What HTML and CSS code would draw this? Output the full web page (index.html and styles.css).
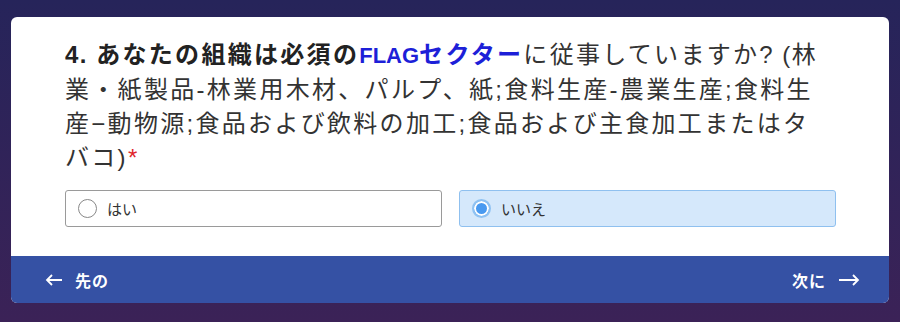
FILE: index.html
```html
<!DOCTYPE html>
<html>
    <head>
        <meta charset="UTF-8">
        <meta name="viewport" content="width=device-width, initial-scale=1.0">
        <title>Survey</title>
        <link rel="stylesheet" href="styles.css">
    </head>
    <body>
        <div class="card">
            <div class="cardbody">
                <p class="question">
                    <b><span class="en">4. </span>あなたの組織は必須の<span class="flag en small">FLAG</span><span class="flag">セクター</span></b>に従事していますか<span class="en">? (</span>林<br>業・紙製品-林業用木材、パルプ、紙;食料生産-農業生産;食料生<br>産&minus;動物源;食品および飲料の加工;食品および主食加工またはタ<br>バコ)<span class="req">*</span>
                </p>
                <div class="options">
                    <label class="option">
                        <span class="radio"></span>
                        <span>はい</span>
                    </label>
                    <label class="option selected">
                        <span class="radio"></span>
                        <span>いいえ</span>
                    </label>
                </div>
            </div>
            <div class="footer">
                <span class="navbtn">
                    <svg class="arrow" width="18" height="12" viewBox="0 0 18 12"><path d="M17 6H2M7 1L2 6l5 5" fill="none" stroke="white" stroke-width="1.8"/></svg>
                    先の
                </span>
                <span class="navbtn">
                    次に
                    <svg class="arrow" width="22" height="12" viewBox="0 0 22 12"><path d="M1 6h19M15 1l5 5-5 5" fill="none" stroke="white" stroke-width="1.8"/></svg>
                </span>
            </div>
        </div>
    </body>
</html>
```

FILE: styles.css
```css
*{
    box-sizing: border-box;
    font-family: "Liberation Sans", "Noto Sans CJK JP", sans-serif;
}
body{
    margin: 0;
    height: 322px;
    background: linear-gradient(#26245a, #3b2257);
    padding: 17px 11px 0 11px;
}
.card{
    background-color: white;
    border-radius: 6px;
    overflow: hidden;
}
.cardbody{
    padding: 21px 53px 29px 54px;
}
.question{
    margin: 0 -20px 0 0;
    font-size: 24px;
    line-height: 34px;
    letter-spacing: 2.3px;
    color: #333;
}
.question b{
    color: #222;
}
.en{
    font-size: 24px;
    letter-spacing: 1.5px;
}
.small{
    font-size: 22px;
    letter-spacing: 0;
}
.flag{
    color: #1d1fd8;
}
.req{
    color: #e0262c;
}
.options{
    display: grid;
    grid-template-columns: 1fr 1fr;
    gap: 17px;
    margin-top: 15px;
}
.option{
    display: flex;
    align-items: center;
    height: 37px;
    padding-left: 12px;
    border: solid 1px #9a9a9a;
    border-radius: 3px;
    font-size: 15px;
    color: #333;
}
.radio{
    width: 19px;
    height: 19px;
    border-radius: 50%;
    border: solid 1px #888;
    margin-right: 10px;
    background-color: white;
}
.selected{
    background-color: #d5e8fb;
    border-color: #8fc0ef;
}
.selected .radio{
    border: solid 2px #8fc2f2;
    background-color: #4a9af0;
    box-shadow: inset 0 0 0 2px white;
}
.footer{
    display: flex;
    justify-content: space-between;
    align-items: center;
    height: 47px;
    padding: 0 29px 0 34px;
    background-color: #3551a4;
    color: white;
    font-size: 16px;
    font-weight: bold;
}
.navbtn{
    display: flex;
    align-items: center;
    gap: 12px;
    letter-spacing: 1px;
}
```
